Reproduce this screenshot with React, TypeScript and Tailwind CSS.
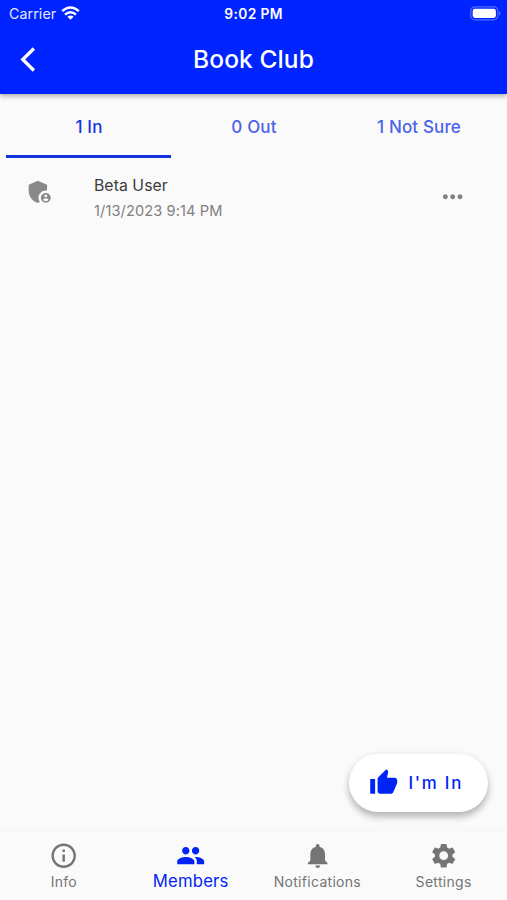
import {
  MdAdminPanelSettings,
  MdInfoOutline,
  MdMoreHoriz,
  MdNotifications,
  MdPeople,
  MdSettings,
  MdThumbUp,
} from "react-icons/md";

const tabs = [
  { label: "1 In", style: "border-[#1230dc] text-[#1634dc]" },
  { label: "0 Out", style: "border-transparent text-[#4b63ea]" },
  { label: "1 Not Sure", style: "border-transparent text-[#4b63ea]" },
];

function StatusBar() {
  return (
    <div className="grid h-[27px] grid-cols-3 items-center text-white">
      <div className="flex items-center gap-[5px] pl-[9px]">
        <span className="text-[14.2px] tracking-[0.1px] text-white/90">Carrier</span>
        <svg width="19" height="14" viewBox="0 0 19 14" fill="none" stroke="white" strokeWidth="2.5">
          <path d="M1.2 5.1Q9.5 -2.1 17.8 5.1" />
          <path d="M4 8.6Q9.5 4 15 8.6" />
          <path d="M9.5 13.8L6.4 10.8Q9.5 8.2 12.6 10.8Z" fill="white" stroke="none" />
        </svg>
      </div>
      <div className="pt-px text-center text-[13.8px] font-semibold tracking-[0.35px]">9:02 PM</div>
      <div className="flex justify-end pr-[6px]">
        <svg width="31" height="15" viewBox="0 0 31 15">
          <rect x="0.8" y="0.8" width="27" height="13" rx="4" fill="none" stroke="white" strokeOpacity="0.32" strokeWidth="1.2" />
          <rect x="2.7" y="2.7" width="23.2" height="9.2" rx="2.3" fill="white" />
          <path d="M29 5.2Q31.4 7.3 29 9.4Z" fill="white" fillOpacity="0.45" />
        </svg>
      </div>
    </div>
  );
}

export default function App() {
  return (
    <div className="flex h-[900px] w-[507px] flex-col overflow-hidden bg-[#fafafa] font-['Inter',sans-serif]">
      <header className="relative z-10 h-[94px] shrink-0 bg-[#0024ff] shadow-[0_2px_5px_rgba(0,0,0,0.32)]">
        <StatusBar />
        <div className="grid h-[65px] grid-cols-[90px_1fr_90px] items-center text-white">
          <button className="pl-[20px]" aria-label="Back">
            <svg width="16" height="25" viewBox="0 0 16 25" fill="none" stroke="white" strokeWidth="3.3">
              <path d="M13.9 1.5L2.8 12.5L13.9 23.5" />
            </svg>
          </button>
          <h1 className="text-center text-[24.5px] font-medium tracking-[0.1px]">Book Club</h1>
        </div>
      </header>

      <nav className="grid h-[63.5px] shrink-0 grid-cols-3 px-[6px]">
        {tabs.map((tab) => (
          <button
            key={tab.label}
            className={`border-b-[3px] pl-px pt-[6px] text-[17px] font-medium tracking-[0.15px] ${tab.style}`}
          >
            {tab.label}
          </button>
        ))}
      </nav>

      <main className="flex grow flex-col">
        <div className="flex items-start pl-[25px] pr-[39.5px] pt-[17.5px]">
          <MdAdminPanelSettings size={29.4} className="mt-[2px] text-[#898989]" />
          <div className="ml-[39.6px] grow">
            <div className="text-[15.8px] leading-[22px] tracking-[0.05px] text-[#3c3c3c]">Beta User</div>
            <div className="mt-[3px] text-[14.6px] leading-[22px] tracking-[0.1px] text-[#808080]">1/13/2023 9:14 PM</div>
          </div>
          <MdMoreHoriz size={29.4} className="mt-[6.5px] text-[#808080]" />
        </div>
        <button className="mb-[18px] mr-[19px] mt-auto flex h-[58px] w-[139px] items-center gap-[10px] self-end rounded-full bg-white pl-[20px] text-[#0024f5] shadow-[0_5px_7px_rgba(0,0,0,0.25),0_1px_10px_rgba(0,0,0,0.06)]">
          <MdThumbUp size={29.4} />
          <span className="pt-[2px] text-[16.8px] font-medium tracking-[1.8px]">I'm In</span>
        </button>
      </main>

      <footer className="grid h-[70px] shrink-0 grid-cols-4 border-t border-[#f5f5f5] text-[14px] tracking-[0.3px] text-[#757575]">
        <div className="flex flex-col items-center pl-px pt-[10px]">
          <MdInfoOutline size={29.4} />
          <span className="mt-[2px] leading-[20px]">Info</span>
        </div>
        <div className="flex flex-col items-center pl-px pt-[10px] text-[#0024f5]">
          <MdPeople size={29.4} />
          <span className="text-[16.7px] leading-[22px] tracking-[0.2px]">Members</span>
        </div>
        <div className="flex flex-col items-center pl-px pt-[10px]">
          <MdNotifications size={29.4} />
          <span className="mt-[2px] leading-[20px]">Notifications</span>
        </div>
        <div className="flex flex-col items-center pt-[10px]">
          <MdSettings size={29.4} />
          <span className="mt-[2px] leading-[20px]">Settings</span>
        </div>
      </footer>
    </div>
  );
}
